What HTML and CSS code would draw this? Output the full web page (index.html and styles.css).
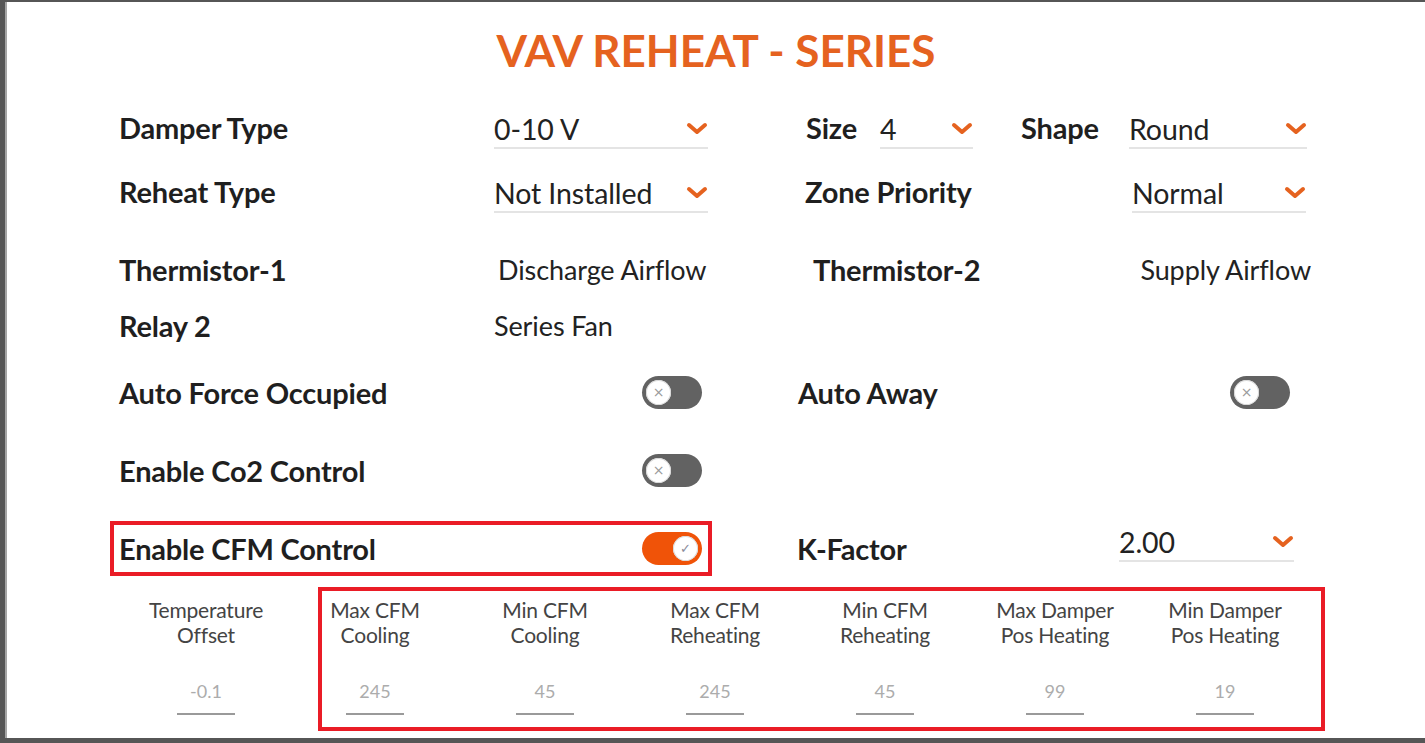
FILE: index.html
```html
<!DOCTYPE html>
<html lang="en">

<head>
    <meta charset="UTF-8">
    <meta name="viewport" content="width=device-width, initial-scale=1.0">
    <title>VAV Reheat - Series</title>
    <link rel="stylesheet" href="styles.css">
</head>

<body>
    <div class="frame">
        <h1 class="title">VAV REHEAT - SERIES</h1>

        <div class="form">
            <!-- Damper / size / shape -->
            <div class="row">
                <div class="main">
                    <div class="label">Damper Type</div>
                    <div class="select select-main"><span>0-10 V</span><svg class="chevron" viewBox="0 0 22 14"><path d="M3 3 L11 10 L19 3"/></svg></div>
                </div>
                <div class="side side-damper">
                    <div class="label label-size">Size</div>
                    <div class="select select-size"><span>4</span><svg class="chevron" viewBox="0 0 22 14"><path d="M3 3 L11 10 L19 3"/></svg></div>
                    <div class="label label-shape">Shape</div>
                    <div class="select select-shape"><span>Round</span><svg class="chevron" viewBox="0 0 22 14"><path d="M3 3 L11 10 L19 3"/></svg></div>
                </div>
            </div>

            <!-- Reheat / zone priority -->
            <div class="row row-reheat">
                <div class="main">
                    <div class="label">Reheat Type</div>
                    <div class="select select-main"><span>Not Installed</span><svg class="chevron" viewBox="0 0 22 14"><path d="M3 3 L11 10 L19 3"/></svg></div>
                </div>
                <div class="side side-zone">
                    <div class="label">Zone Priority</div>
                    <div class="select select-zone"><span>Normal</span><svg class="chevron" viewBox="0 0 22 14"><path d="M3 3 L11 10 L19 3"/></svg></div>
                </div>
            </div>

            <!-- Thermistors -->
            <div class="row row-wide">
                <div class="main">
                    <div class="label">Thermistor-1</div>
                    <div class="value value-discharge">Discharge Airflow</div>
                </div>
                <div class="side side-therm">
                    <div class="label">Thermistor-2</div>
                    <div class="value value-supply">Supply Airflow</div>
                </div>
            </div>

            <div class="row row-tight">
                <div class="main">
                    <div class="label">Relay 2</div>
                    <div class="value">Series Fan</div>
                </div>
            </div>

            <!-- Toggles -->
            <div class="row row-mid">
                <div class="main">
                    <div class="label">Auto Force Occupied</div>
                    <div class="toggle-cell"><span class="toggle"><span class="knob">&times;</span></span></div>
                </div>
                <div class="side side-away">
                    <div class="label">Auto Away</div>
                    <span class="toggle"><span class="knob">&times;</span></span>
                </div>
            </div>

            <div class="row row-wide">
                <div class="main">
                    <div class="label">Enable Co2 Control</div>
                    <div class="toggle-cell"><span class="toggle"><span class="knob">&times;</span></span></div>
                </div>
            </div>

            <div class="row row-wide">
                <div class="main boxed">
                    <div class="label">Enable CFM Control</div>
                    <div class="toggle-cell"><span class="toggle on"><span class="knob">&#10003;</span></span></div>
                </div>
                <div class="side side-kfactor">
                    <div class="label">K-Factor</div>
                    <div class="select select-kfactor"><span>2.00</span><svg class="chevron" viewBox="0 0 22 14"><path d="M3 3 L11 10 L19 3"/></svg></div>
                </div>
            </div>
        </div>

        <!-- Airflow limits -->
        <div class="limits">
            <div class="limit limit-first">
                <div class="limit-label">Temperature<br>Offset</div>
                <div class="limit-value">-0.1</div>
            </div>
            <div class="limits-box">
                <div class="limit">
                    <div class="limit-label">Max CFM<br>Cooling</div>
                    <div class="limit-value">245</div>
                </div>
                <div class="limit">
                    <div class="limit-label">Min CFM<br>Cooling</div>
                    <div class="limit-value">45</div>
                </div>
                <div class="limit">
                    <div class="limit-label">Max CFM<br>Reheating</div>
                    <div class="limit-value">245</div>
                </div>
                <div class="limit">
                    <div class="limit-label">Min CFM<br>Reheating</div>
                    <div class="limit-value">45</div>
                </div>
                <div class="limit">
                    <div class="limit-label">Max Damper<br>Pos Heating</div>
                    <div class="limit-value">99</div>
                </div>
                <div class="limit">
                    <div class="limit-label">Min Damper<br>Pos Heating</div>
                    <div class="limit-value">19</div>
                </div>
            </div>
        </div>
    </div>
</body>

</html>
```

FILE: styles.css
```css
body {
    margin: 0;
    padding: 2px 0 0 5px;
    height: 743px;
    box-sizing: border-box;
    overflow: hidden;
    background-color: #565656;
    font-family: Lato, "Open Sans", sans-serif;
    color: #1f1f1f;
}

.frame {
    height: 736px;
    background: #fff;
    border-left: 2px solid #a5a5a5;
    overflow: hidden;
}

.title {
    margin: 22px 0 0;
    font-size: 44px;
    line-height: 52px;
    font-weight: 700;
    text-align: center;
    color: #e5621f;
}

.form {
    margin-top: 23px;
    padding-left: 112px;
}

.row {
    display: flex;
    align-items: center;
    height: 56px;
}

.row-reheat {
    margin-top: 8px;
}

.row-wide {
    margin-top: 22px;
}

.row-mid {
    margin-top: 11px;
}

.main {
    display: flex;
    align-items: center;
    flex: none;
    width: 589px;
    height: 100%;
}

.main > .label {
    width: 375px;
    flex: none;
}

.main.boxed {
    width: 602px;
    height: 55px;
    box-sizing: border-box;
    margin: 0 -4px 0 -9px;
    padding-left: 5px;
    border: 4px solid #ea1c26;
}

.label {
    font-size: 29px;
    font-weight: 700;
    letter-spacing: -0.2px;
    white-space: nowrap;
}

.value {
    font-size: 27px;
    letter-spacing: -0.1px;
    white-space: nowrap;
    color: #222;
}

.value-discharge {
    padding-left: 4px;
}

.select {
    display: flex;
    align-items: center;
    justify-content: space-between;
    height: 44px;
    padding-top: 6px;
    box-sizing: border-box;
    border-bottom: 2px solid #e4e4e4;
    font-size: 28.5px;
    letter-spacing: -0.1px;
    color: #222;
}

.chevron {
    width: 22px;
    height: 14px;
    flex: none;
}

.chevron path {
    fill: none;
    stroke: #e5621f;
    stroke-width: 4;
    stroke-linecap: round;
    stroke-linejoin: round;
}

.select-main {
    width: 214px;
}

.side {
    display: flex;
    align-items: center;
    width: 513px;
    margin-left: 90px;
    box-sizing: border-box;
}

.boxed + .side {
    margin-left: 89px;
}

.side-damper {
    padding-left: 8px;
}

.label-size {
    width: 74px;
}

.select-size {
    width: 93px;
}

.label-shape {
    width: 108px;
    margin-left: 48px;
}

.select-shape {
    width: 178px;
}

.side-zone {
    padding-left: 7px;
}

.select-zone {
    width: 174px;
    margin-left: auto;
    margin-right: 5px;
}

.side-therm {
    padding-left: 15px;
}

.value-supply {
    margin-left: auto;
}

.side-away .toggle {
    margin-left: auto;
    margin-right: 21px;
}

.select-kfactor {
    width: 175px;
    margin: 0 16px 16px auto;
}

.toggle-cell {
    flex: 1;
    display: flex;
    justify-content: flex-end;
    padding-right: 6px;
}

.toggle {
    position: relative;
    display: block;
    width: 60px;
    height: 33px;
    border-radius: 17px;
    background: #626262;
}

.knob {
    position: absolute;
    top: 4px;
    left: 4px;
    width: 25px;
    height: 25px;
    border-radius: 50%;
    background: #fff;
    box-shadow: 0 0 0 1px #d8d8d8 inset;
    font-family: "DejaVu Sans", sans-serif;
    font-size: 14px;
    line-height: 25px;
    text-align: center;
    color: #9a9a9a;
}

.toggle.on {
    background: #f05308;
}

.toggle.on .knob {
    left: auto;
    right: 4px;
    font-size: 13px;
    color: #8a8a9a;
}

.limits {
    display: flex;
    align-items: flex-start;
    margin-top: 11px;
    padding-left: 147px;
}

.limits-box {
    display: flex;
    gap: 66px;
    margin-left: 60px;
    padding: 6px 44px 0 1px;
    height: 130px;
    border: 4px solid #ea1c26;
}

.limit {
    display: flex;
    flex-direction: column;
    align-items: center;
    width: 104px;
}

.limit-first {
    padding-top: 10px;
}

.limit-label {
    font-size: 21px;
    line-height: 25px;
    letter-spacing: -0.2px;
    text-align: center;
    white-space: nowrap;
    color: #444;
}

.limit-value {
    width: 58px;
    height: 36px;
    margin-top: 32px;
    box-sizing: border-box;
    border-bottom: 2px solid #9a9a9a;
    font-size: 18px;
    line-height: 24px;
    text-align: center;
    color: #acacac;
}
```
